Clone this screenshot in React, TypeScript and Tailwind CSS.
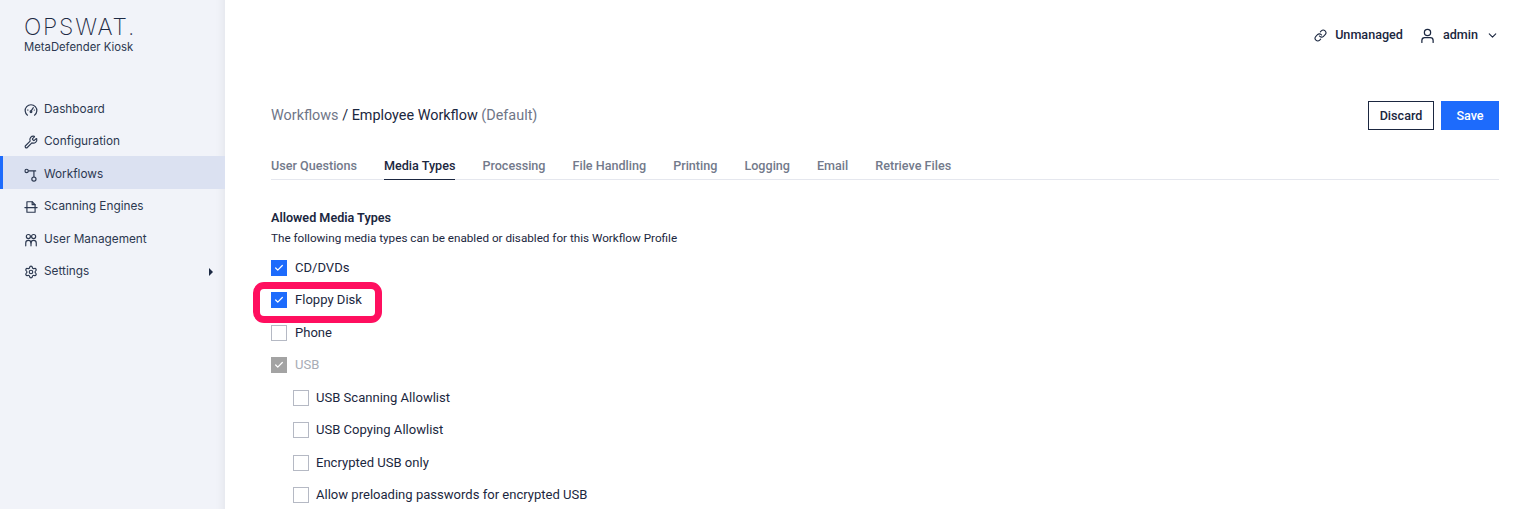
import { Check, ChevronDown, Link as LinkIcon, Settings, Wrench } from "lucide-react";
import type { ReactNode } from "react";

function Svg({ children, className }: { children: ReactNode; className?: string }) {
  return (
    <svg viewBox="0 0 24 24" fill="none" stroke="currentColor" strokeWidth={2} strokeLinecap="round" strokeLinejoin="round" className={className}>
      {children}
    </svg>
  );
}

const iconClass = "h-[14px] w-[14px]";

const GaugeIcon = () => (
  <Svg className={iconClass}>
    <path d="M6 21a10 10 0 1 1 12 0" />
    <path d="M12 14l4-6" />
    <circle cx="12" cy="15" r="1.5" />
    <path d="M6 12h1M17.5 12h.5" />
  </Svg>
);

const FlowIcon = () => (
  <Svg className={iconClass}>
    <circle cx="4.5" cy="5" r="2.8" />
    <circle cx="17" cy="19" r="3.6" />
    <path d="M8 5h12M17 5v10" />
  </Svg>
);

const EngineIcon = () => (
  <Svg className={iconClass}>
    <path d="M5 13V3h9l5 5v5" />
    <path d="M14 3v5h5" />
    <path d="M1.5 13h21" />
    <path d="M5 13v8h14v-8" />
  </Svg>
);

const UsersIcon = () => (
  <Svg className={iconClass}>
    <circle cx="7.5" cy="6" r="3.5" />
    <circle cx="16.5" cy="6" r="3.5" />
    <path d="M3 22v-5a4.5 4.5 0 0 1 9 0v5" />
    <path d="M12 17a4.5 4.5 0 0 1 9 0v5" />
  </Svg>
);

const UserIcon = () => (
  <Svg className="ml-[17px] h-[15px] w-[15px]">
    <circle cx="12" cy="7" r="5" />
    <path d="M3 23v-3a4.5 4.5 0 0 1 4.5-4.5h9A4.5 4.5 0 0 1 21 20v3" />
  </Svg>
);

const navItems: { label: string; icon: ReactNode; active?: boolean; arrow?: boolean }[] = [
  { label: "Dashboard", icon: <GaugeIcon /> },
  { label: "Configuration", icon: <Wrench className={iconClass} strokeWidth={2} /> },
  { label: "Workflows", icon: <FlowIcon />, active: true },
  { label: "Scanning Engines", icon: <EngineIcon /> },
  { label: "User Management", icon: <UsersIcon /> },
  { label: "Settings", icon: <Settings className={iconClass} strokeWidth={2} />, arrow: true },
];

const tabs = ["User Questions", "Media Types", "Processing", "File Handling", "Printing", "Logging", "Email", "Retrieve Files"];

function Box({ state }: { state: "on" | "off" | "disabled" }) {
  if (state === "off") return <span className="h-4 w-4 shrink-0 border border-[#b5b9c4] bg-white" />;
  return (
    <span className={`flex h-4 w-4 shrink-0 items-center justify-center ${state === "on" ? "bg-[#1d6bfc]" : "bg-[#a3a3a3]"}`}>
      <Check className="h-2.5 w-2.5 text-white" strokeWidth={3} />
    </span>
  );
}

function Row({ label, state, child }: { label: string; state: "on" | "off" | "disabled"; child?: boolean }) {
  return (
    <div className={`flex h-[32.5px] items-center ${child ? "gap-[7px] pl-[22px]" : "gap-2"}`}>
      <Box state={state} />
      <span className={`text-[13.05px] ${state === "disabled" ? "text-[#a8acb5]" : "text-[#1b2740]"}`}>{label}</span>
    </div>
  );
}

export default function App() {
  return (
    <div className="flex h-[509px] w-[1523px] overflow-hidden bg-white font-['Roboto',sans-serif] text-[#1b2740]">
      <aside className="w-[225px] shrink-0 bg-[#f1f3f9] shadow-[inset_-12px_0_10px_-10px_rgba(0,0,0,0.06)]">
        <div className="pl-6 pt-[15px]">
          <div className="font-['Inter',sans-serif] text-[23px] font-extralight leading-[25px] tracking-[1.8px] text-[#1d2a44]">OPSWAT.</div>
          <div className="font-['Inter',sans-serif] text-[11.3px] leading-[14px] text-[#2c3850]">MetaDefender Kiosk</div>
        </div>
        <nav className="mt-[37px]">
          {navItems.map((item) => (
            <div
              key={item.label}
              className={`relative flex h-[32.5px] items-center gap-[6px] pl-6 pr-3 pt-[5px] font-['Inter',sans-serif] text-[11.8px] text-[#2c3850] ${item.active ? "bg-[#dbe1f1]" : ""}`}
            >
              {item.active && <span className="absolute inset-y-0 left-0 w-[3px] bg-[#1d6bfc]" />}
              {item.icon}
              <span className="flex-1">{item.label}</span>
              {item.arrow && <span className="h-0 w-0 border-y-[4px] border-l-[4px] border-y-transparent border-l-[#1d2a44]" />}
            </div>
          ))}
        </nav>
      </aside>
      <main className="flex-1 pl-[46px] pr-6">
        <div className="flex h-[71px] items-center justify-end text-[12.6px] font-medium">
          <LinkIcon className="mr-2 h-[13px] w-[13px]" strokeWidth={2} />
          <span>Unmanaged</span>
          <UserIcon />
          <span className="ml-2">admin</span>
          <ChevronDown className="ml-2 h-[13px] w-[13px]" strokeWidth={2} />
        </div>
        <div className="mt-[30px] flex h-[29px] items-center justify-between">
          <div className="text-[14.4px] text-[#6f7687]">
            Workflows <span className="text-[#1b2740]">/ Employee Workflow</span> (Default)
          </div>
          <div className="flex gap-[7px] text-[12.6px] font-medium">
            <button className="h-[29px] w-[66px] border border-[#1b2740] pt-px">Discard</button>
            <button className="h-[29px] w-[58px] bg-[#1d6bfc] pt-px text-white">Save</button>
          </div>
        </div>
        <div className="mt-[13px] flex h-[37px] gap-[27px] border-b border-[#e5e7ee] text-[12.6px] font-medium text-[#737a8b]">
          {tabs.map((t) => (
            <div key={t} className={`flex h-[37px] items-center pt-[10px] ${t === "Media Types" ? "border-b-[1.5px] border-[#1b2740] text-[#1b2740]" : ""}`}>
              {t}
            </div>
          ))}
        </div>
        <h2 className="mt-[30px] text-[12.6px] font-semibold leading-4">Allowed Media Types</h2>
        <p className="mt-[4px] text-[11.7px] leading-4">The following media types can be enabled or disabled for this Workflow Profile</p>
        <div className="mt-[5.4px]">
          <Row label="CD/DVDs" state="on" />
          <div className="relative">
            <Row label="Floppy Disk" state="on" />
            <span className="absolute left-[-18.5px] top-[-2px] h-[41px] w-[129px] rounded-[11px] border-[7px] border-[#ff0f5f]" />
          </div>
          <Row label="Phone" state="off" />
          <Row label="USB" state="disabled" />
          <Row label="USB Scanning Allowlist" state="off" child />
          <Row label="USB Copying Allowlist" state="off" child />
          <Row label="Encrypted USB only" state="off" child />
          <Row label="Allow preloading passwords for encrypted USB" state="off" child />
        </div>
      </main>
    </div>
  );
}
